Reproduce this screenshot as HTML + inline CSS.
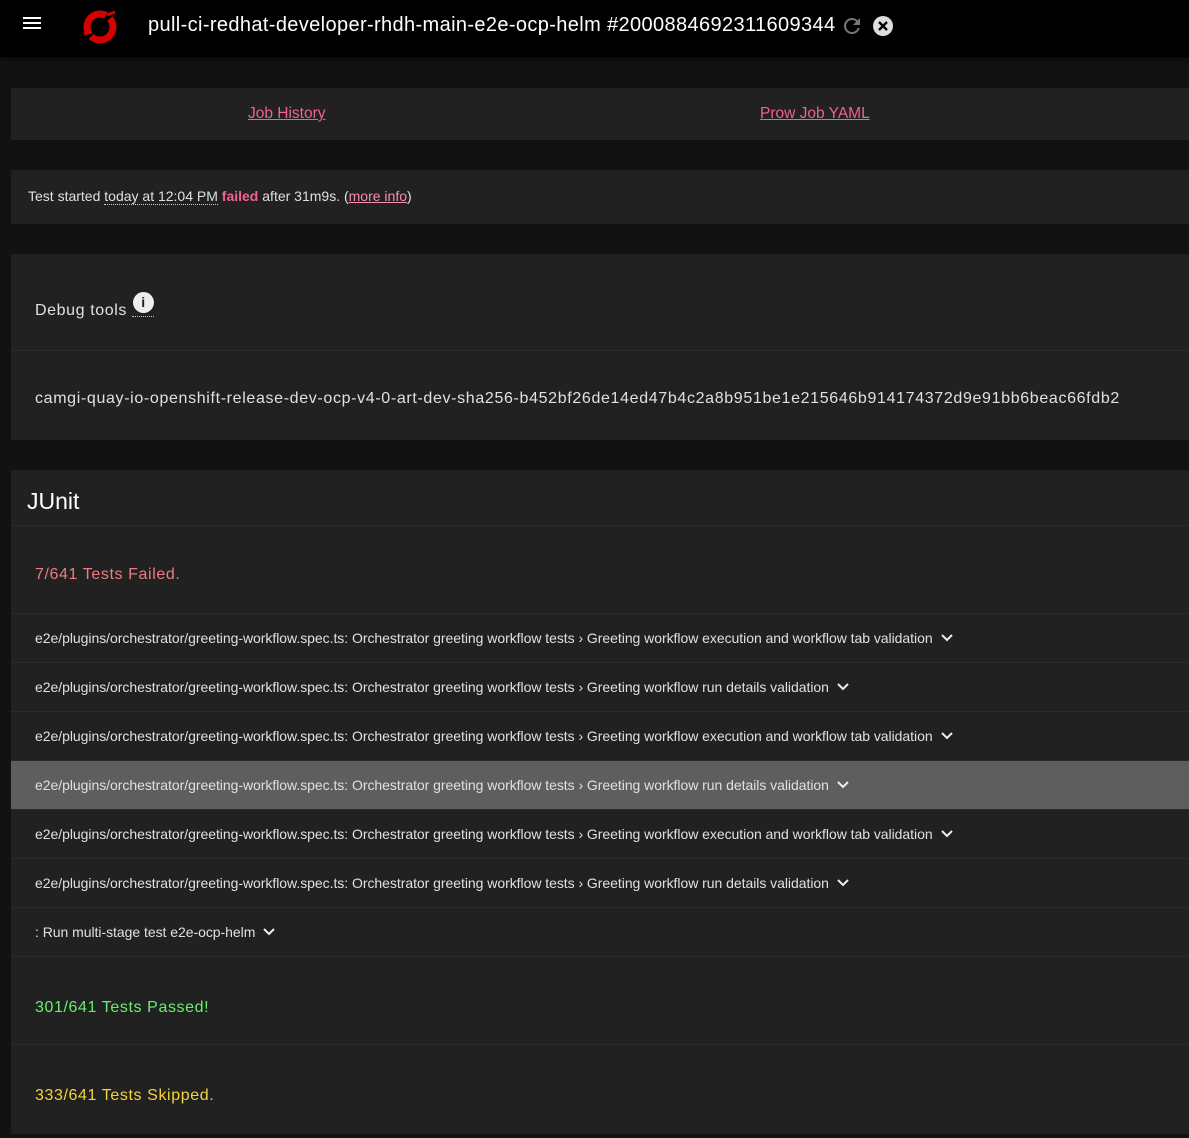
<!DOCTYPE html>
<html><head><meta charset="utf-8"><style>
*{box-sizing:border-box;margin:0;padding:0}
body{width:1189px;height:1138px;overflow:hidden;background:#121212;font-family:"Liberation Sans",sans-serif;color:#e0e0e0;position:relative}
.hdr{position:absolute;left:0;top:0;width:1189px;height:57px;background:#000;box-shadow:0 2px 4px rgba(0,0,0,.6)}
.card{position:absolute;left:11px;right:0;background:#212121}
a{color:#f06292;text-decoration:underline}
.row{height:49px;border-top:1px solid #2a2a2a;display:flex;align-items:center;padding-left:24px;font-size:14px;letter-spacing:-0.04px;color:#e0e0e0}
.row svg{margin-left:8px}
</style></head><body>
<div class="hdr">
 <div style="position:absolute;left:23px;top:17px;width:18px;height:2px;background:#fff;box-shadow:0 5px 0 #fff,0 10px 0 #fff"></div>
 <svg style="position:absolute;left:79px;top:8px" width="42" height="38" viewBox="0 0 42 38"><circle cx="21" cy="19" r="13" fill="none" stroke="#d50000" stroke-width="7" stroke-dasharray="30 5 32 5"/><path d="M28 7l8-3M5 26l8-2" stroke="#d50000" stroke-width="3"/></svg>
 <div style="position:absolute;left:148px;top:14px;font-size:20px;letter-spacing:0.37px;color:#fff">pull-ci-redhat-developer-rhdh-main-e2e-ocp-helm #2000884692311609344</div>
 <svg style="position:absolute;left:840px;top:14px" width="24" height="24" viewBox="0 0 24 24"><path d="M17.65 6.35A7.95 7.95 0 0 0 12 4a8 8 0 1 0 7.73 10h-2.08A6 6 0 1 1 12 6c1.66 0 3.14.69 4.22 1.78L13 11h7V4z" fill="#777"/></svg>
 <svg style="position:absolute;left:873px;top:16px" width="20" height="20" viewBox="0 0 20 20"><circle cx="10" cy="10" r="10" fill="#ddd"/><path d="M6 6l8 8M14 6l-8 8" stroke="#000" stroke-width="2.4"/></svg>
</div>
<div class="card" style="top:88px;height:52px;font-size:15.5px">
 <a style="position:absolute;left:237px;top:17px">Job History</a>
 <a style="position:absolute;left:749px;top:17px">Prow Job YAML</a>
</div>
<div class="card" style="top:170px;height:54px;font-size:14px;padding:18px 0 0 17px">Test started <span style="border-bottom:1px dotted #ccc">today at 12:04 PM</span> <b style="color:#f06292">failed</b> after 31m9s. (<a style="color:#f48fb1">more info</a>)</div>
<div class="card" style="top:254px;height:186px">
 <div style="position:absolute;left:24px;top:47px;font-size:16px;letter-spacing:.6px">Debug tools <span style="display:inline-block;border-bottom:1px dotted #ccc;width:22px;height:16px;vertical-align:-2px;position:relative"><span style="position:absolute;left:1px;top:-9px;width:21px;height:21px;border-radius:50%;background:#eee;color:#212121;font-weight:bold;font-size:14px;text-align:center;line-height:21px">i</span></span></div>
 <div style="position:absolute;left:0;right:0;top:96px;border-top:1px solid #2a2a2a"></div>
 <div style="position:absolute;left:24px;top:136px;font-size:16px;letter-spacing:.65px">camgi-quay-io-openshift-release-dev-ocp-v4-0-art-dev-sha256-b452bf26de14ed47b4c2a8b951be1e215646b914174372d9e91bb6beac66fdb2</div>
</div>
<div class="card" style="top:470px;height:664px">
 <div style="height:55px;padding:18px 0 0 16px;font-size:23px;color:#fff">JUnit</div>
 <div style="height:88px;border-top:1px solid #2a2a2a;padding:40px 0 0 24px;font-size:16px;color:#ef7b80;letter-spacing:.6px">7/641 Tests Failed.</div>
 <div class="row">e2e/plugins/orchestrator/greeting-workflow.spec.ts: Orchestrator greeting workflow tests › Greeting workflow execution and workflow tab validation<svg width="12" height="8" viewBox="0 0 12 8"><path d="M1 1l5 5 5-5" stroke="#eee" stroke-width="2" fill="none"/></svg></div>
 <div class="row">e2e/plugins/orchestrator/greeting-workflow.spec.ts: Orchestrator greeting workflow tests › Greeting workflow run details validation<svg width="12" height="8" viewBox="0 0 12 8"><path d="M1 1l5 5 5-5" stroke="#eee" stroke-width="2" fill="none"/></svg></div>
 <div class="row">e2e/plugins/orchestrator/greeting-workflow.spec.ts: Orchestrator greeting workflow tests › Greeting workflow execution and workflow tab validation<svg width="12" height="8" viewBox="0 0 12 8"><path d="M1 1l5 5 5-5" stroke="#eee" stroke-width="2" fill="none"/></svg></div>
 <div class="row" style="background:#5e5e5e">e2e/plugins/orchestrator/greeting-workflow.spec.ts: Orchestrator greeting workflow tests › Greeting workflow run details validation<svg width="12" height="8" viewBox="0 0 12 8"><path d="M1 1l5 5 5-5" stroke="#eee" stroke-width="2" fill="none"/></svg></div>
 <div class="row">e2e/plugins/orchestrator/greeting-workflow.spec.ts: Orchestrator greeting workflow tests › Greeting workflow execution and workflow tab validation<svg width="12" height="8" viewBox="0 0 12 8"><path d="M1 1l5 5 5-5" stroke="#eee" stroke-width="2" fill="none"/></svg></div>
 <div class="row">e2e/plugins/orchestrator/greeting-workflow.spec.ts: Orchestrator greeting workflow tests › Greeting workflow run details validation<svg width="12" height="8" viewBox="0 0 12 8"><path d="M1 1l5 5 5-5" stroke="#eee" stroke-width="2" fill="none"/></svg></div>
 <div class="row">: Run multi-stage test e2e-ocp-helm<svg width="12" height="8" viewBox="0 0 12 8"><path d="M1 1l5 5 5-5" stroke="#eee" stroke-width="2" fill="none"/></svg></div>
 <div style="height:88px;border-top:1px solid #2a2a2a;padding:42px 0 0 24px;font-size:16px;color:#69f06b;letter-spacing:.6px">301/641 Tests Passed!</div>
 <div style="height:88px;border-top:1px solid #2a2a2a;padding:42px 0 0 24px;font-size:16px;color:#f5d33b;letter-spacing:.6px">333/641 Tests Skipped.</div>
</div>
</body></html>
